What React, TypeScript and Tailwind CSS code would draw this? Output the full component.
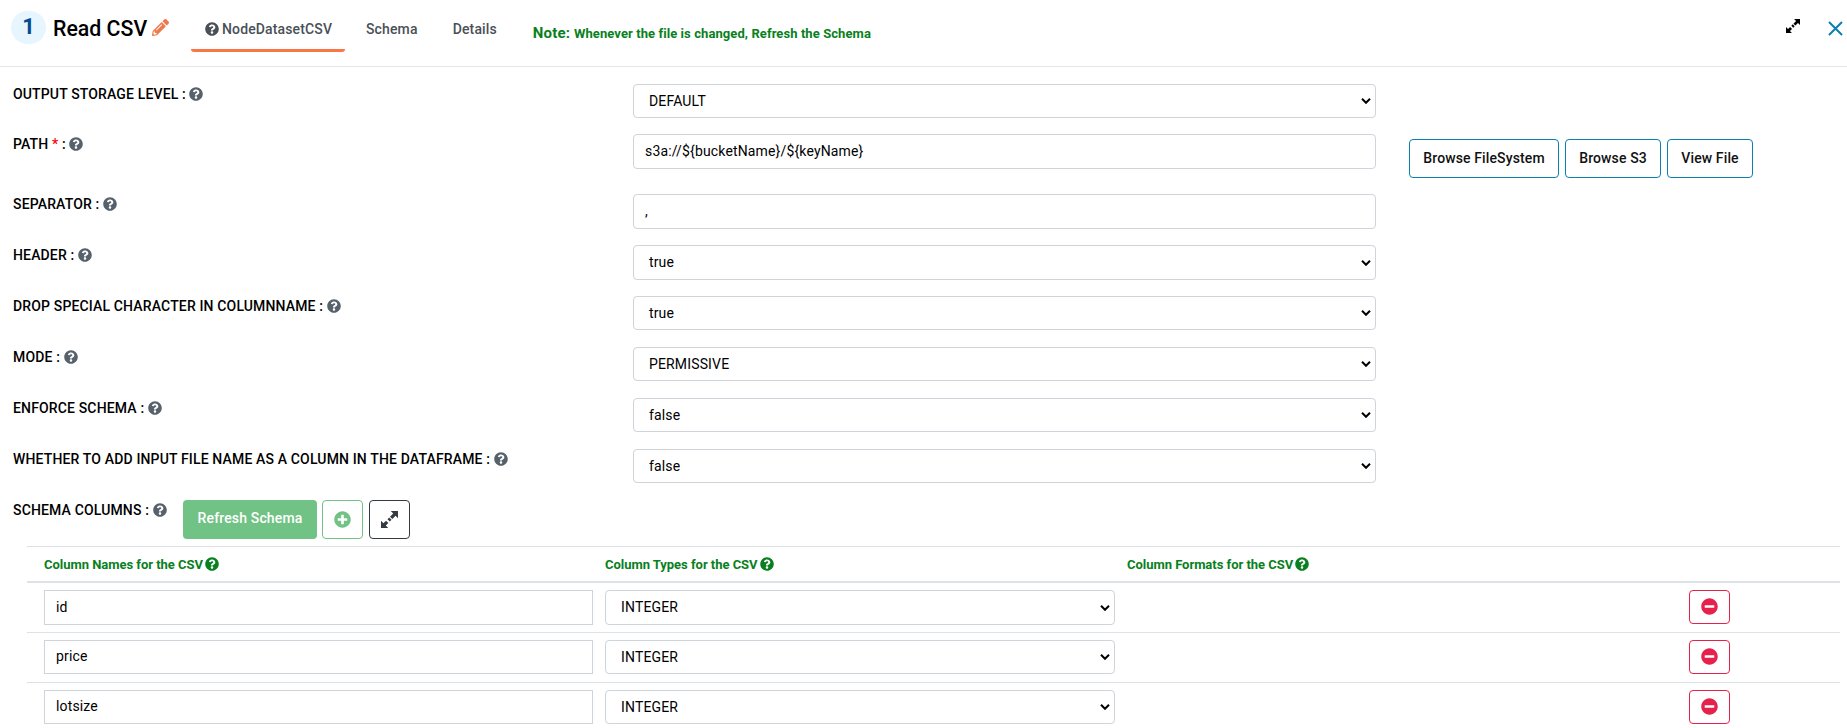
import React from "react";
import { FaQuestionCircle, FaPencilAlt, FaPlusCircle, FaMinusCircle } from "react-icons/fa";

type Field = { label: string; value: string; kind: "select" | "input"; row: string; box: string; required?: boolean; files?: boolean };

const fields: Field[] = [
  { label: "OUTPUT STORAGE LEVEL", value: "DEFAULT", kind: "select", row: "h-[50px]", box: "h-[34px]" },
  { label: "PATH", value: "s3a://${bucketName}/${keyName}", kind: "input", row: "h-[60px]", box: "h-[35px]", required: true, files: true },
  { label: "SEPARATOR", value: ",", kind: "input", row: "h-[51px]", box: "h-[35px]" },
  { label: "HEADER", value: "true", kind: "select", row: "h-[51px]", box: "h-[35px]" },
  { label: "DROP SPECIAL CHARACTER IN COLUMNNAME", value: "true", kind: "select", row: "h-[51px]", box: "h-[34px]" },
  { label: "MODE", value: "PERMISSIVE", kind: "select", row: "h-[51px]", box: "h-[34px]" },
  { label: "ENFORCE SCHEMA", value: "false", kind: "select", row: "h-[51px]", box: "h-[34px]" },
  { label: "WHETHER TO ADD INPUT FILE NAME AS A COLUMN IN THE DATAFRAME", value: "false", kind: "select", row: "h-[51px]", box: "h-[34px]" },
];

function Chevron() {
  return (
    <svg className="h-[6px] w-[10px] shrink-0" viewBox="0 0 10 6" fill="none" stroke="#000" strokeWidth="2">
      <path d="M1 .8l4 4 4-4" />
    </svg>
  );
}

function Expand({ className }: { className: string }) {
  return (
    <svg className={className} viewBox="0 0 16 16" fill="currentColor">
      <path d="M9.200 0H16v6.800l-2.300-2.300-3 3-2.200-2.200 3-3zM6.800 16H0V9.200l2.300 2.300 2.400-2.400 2.200 2.200-2.400 2.400zM7.700 6.100l2.200 2.200-1.600 1.600-2.200-2.200z" />
    </svg>
  );
}

function Label({ text, required }: { text: string; required?: boolean }) {
  return (
    <div className="mt-px flex h-[19px] items-center whitespace-pre text-[14px] font-medium leading-[19px] tracking-[0.15px]">
      <span>{text}</span>
      {required && <span className="text-[#f00]"> *</span>}
      <span> :</span>
      <FaQuestionCircle className="mb-[2px] ml-[3.5px] size-[14px] text-[#56616b]" />
    </div>
  );
}

function SelectBox({ value, className }: { value: string; className: string }) {
  return (
    <div className={`flex items-center justify-between rounded border border-[#ced4da] pl-[15px] pr-1 text-[14px] tracking-[0.15px] ${className}`}>
      <span>{value}</span>
      <Chevron />
    </div>
  );
}

function FileButton({ text, className }: { text: string; className: string }) {
  return (
    <button className={`flex h-[39px] items-center justify-center rounded border border-[#0880b0] pb-px text-[14px] font-medium tracking-[0.12px] text-[#111] ${className}`}>{text}</button>
  );
}

const headings = ["Column Names for the CSV", "Column Types for the CSV", "Column Formats for the CSV"];
const columns = [
  { name: "id", row: "h-[50px]", box: "h-[35px]", text: "pb-px" },
  { name: "price", row: "h-[50px]", box: "h-[34px]", text: "pb-0.5" },
  { name: "lotsize", row: "h-[50px]", box: "h-[34px]", text: "pb-0.5" },
];
const grid = "grid grid-cols-[561px_522px_562px_1fr] pl-[17px]";

export default function App() {
  return (
    <div className="h-[728px] w-full overflow-hidden bg-white font-[Roboto,sans-serif] text-black">
      <header className="flex h-[67px] items-start border-b border-[#e6e6e6] pl-[11px]">
        <div className="mt-[11px] flex h-[33px] w-[35px] items-center justify-center rounded-full bg-[#e7f5fe] pb-[3px] text-[22px] font-bold text-[#084a91]">1</div>
        <h1 className="ml-[7px] mt-3 w-[99px] whitespace-nowrap text-[21.3px] font-medium leading-[33px]">Read CSV</h1>
        <FaPencilAlt className="mt-[19px] size-[17px] text-[#ee7b4d]" />
        <nav className="ml-[22px] flex text-[14px] font-medium tracking-[0.14px] text-[#495057]">
          <div className="flex h-[52px] w-[154px] flex-col">
            <div className="flex h-[49px] items-center gap-[3px] pl-[14px] pt-[9px]">
              <FaQuestionCircle className="mb-px size-[14px]" />
              <span>NodeDatasetCSV</span>
            </div>
            <div className="h-[3px] rounded-b-sm bg-[#fa7645]" />
          </div>
          <div className="flex h-[49px] items-center pl-[21px] pt-[9px]">Schema</div>
          <div className="flex h-[49px] items-center pl-[35px] pt-[9px]">Details</div>
        </nav>
        <div className="ml-[36px] mt-[23px] flex items-baseline gap-1 whitespace-nowrap font-bold leading-[21px] text-[#088020]">
          <span className="text-[15px] tracking-[0.15px]">Note:</span>
          <span className="text-[13px] tracking-[0.08px]">Whenever the file is changed, Refresh the Schema</span>
        </div>
        <Expand className="ml-auto mt-[19px] size-[14px]" />
        <svg className="ml-[28px] mr-1 mt-[21px] size-[15px]" viewBox="0 0 15 15" fill="none" stroke="#0880b0" strokeWidth="2">
          <path d="M1 1l13 13M14 1L1 14" />
        </svg>
      </header>

      <main className="pt-[17px]">
        {fields.map((f) => (
          <div key={f.label} className={`flex items-start pl-[13px] ${f.row}`}>
            <div className="w-[620px] shrink-0">
              <Label text={f.label} required={f.required} />
            </div>
            {f.kind === "select" ? (
              <SelectBox value={f.value} className={`w-[743px] ${f.box}`} />
            ) : (
              <div className={`flex w-[743px] items-center rounded border border-[#ced4da] pl-[11px] text-[14px] tracking-[0.15px] ${f.box}`}>{f.value}</div>
            )}
            {f.files && (
              <div className="ml-[33px] mt-[5px] flex gap-1.5">
                <FileButton text="Browse FileSystem" className="w-[150px]" />
                <FileButton text="Browse S3" className="w-[96px]" />
                <FileButton text="View File" className="w-[86px]" />
              </div>
            )}
          </div>
        ))}

        <div className="flex h-[46px] items-start pl-[13px]">
          <div className="w-[170px]">
            <Label text="SCHEMA COLUMNS" />
          </div>
          <button className="flex h-[39px] w-[134px] items-center justify-center rounded bg-[#71c285] pb-0.5 text-[14px] font-medium tracking-[0.15px] text-white">Refresh Schema</button>
          <button className="ml-[5px] flex h-[39px] w-[41px] items-center justify-center rounded border border-[#71c285] pb-px text-[#71c285]">
            <FaPlusCircle className="size-[17px]" />
          </button>
          <button className="ml-[6px] flex h-[39px] w-[41px] items-center justify-center rounded border border-[#343a40] pb-px text-[#343a40]">
            <Expand className="size-[17px]" />
          </button>
        </div>

        <section className="ml-[27px] mr-[7px]">
          <div className={`h-[37px] border-b-2 border-t border-[#dee2e6] ${grid}`}>
            {headings.map((h) => (
              <div key={h} className="flex items-center gap-[2px] pt-px text-[13px] font-bold tracking-[-0.03px] text-[#088020]">
                <span>{h}</span>
                <FaQuestionCircle className="mb-[2px] size-[14px]" />
              </div>
            ))}
          </div>
          {columns.map((c) => (
            <div key={c.name} className={`items-start border-b border-[#dee2e6] pt-[7px] last:border-b-0 ${grid} ${c.row}`}>
              <div className={`mr-3 flex items-center border border-[#ced4da] pl-[11px] text-[14px] tracking-[0.15px] ${c.box} ${c.text}`}>{c.name}</div>
              <SelectBox value="INTEGER" className={`mr-[12px] ${c.box}`} />
              <span />
              <button className="flex h-[34px] w-[41px] items-center justify-center rounded border border-[#e6214b] pb-px text-[#e6214b]">
                <FaMinusCircle className="size-[17px]" />
              </button>
            </div>
          ))}
        </section>
      </main>
    </div>
  );
}
